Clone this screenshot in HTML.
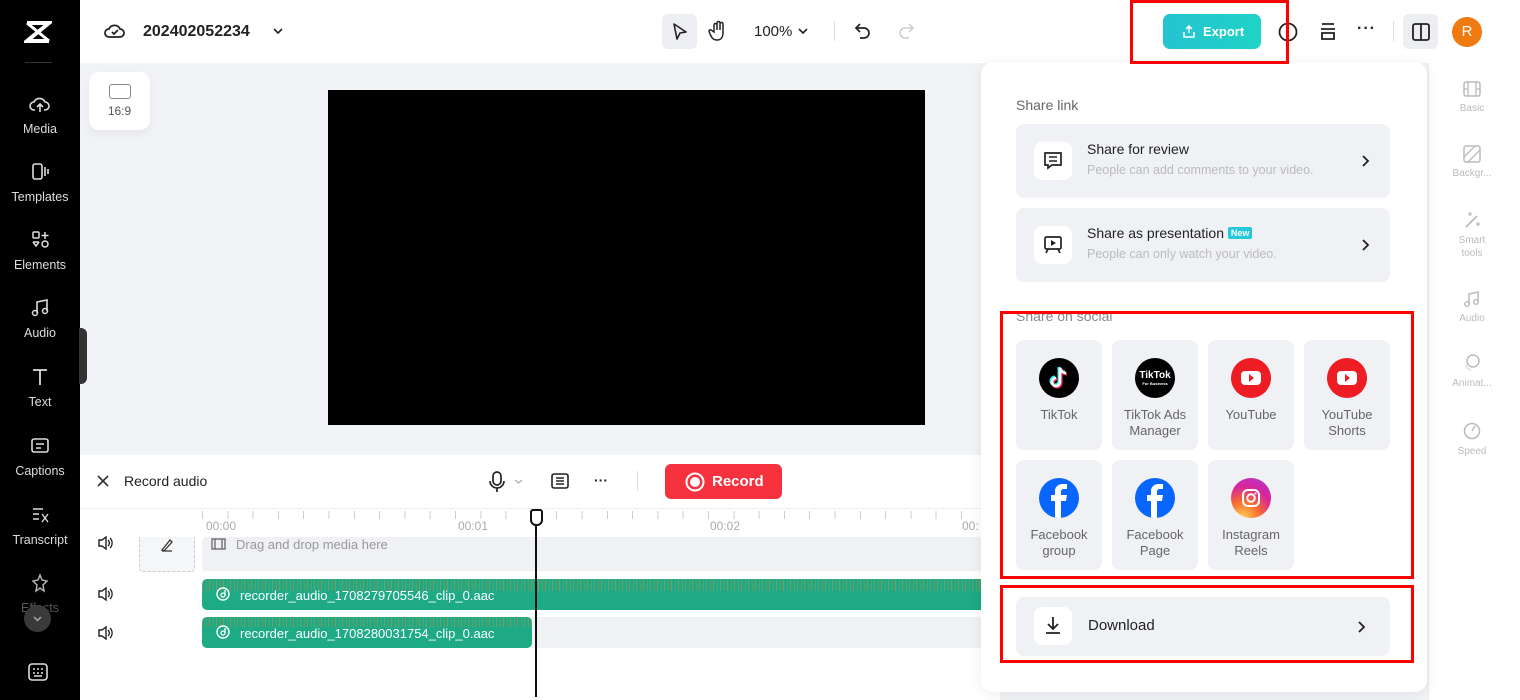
<!DOCTYPE html>
<html><head><meta charset="utf-8"><style>
*{box-sizing:border-box;margin:0;padding:0}
body{width:1520px;height:700px;overflow:hidden;background:#f1f3f6;font-family:"Liberation Sans",sans-serif;position:relative;color:#222}
.abs{position:absolute}
.side{left:0;top:0;width:80px;height:700px;background:#000;color:#ddd}
.si{position:absolute;left:0;width:80px;text-align:center;font-size:12.5px;color:#ddd}
.si svg{display:block;margin:0 auto 4px}
.top{left:80px;top:0;width:1440px;height:63px;background:#fff}
.card{background:#eff1f4;border-radius:8px;position:absolute}
.tile{background:#eff1f4;border-radius:8px;position:absolute;width:86px;height:110px;text-align:center;font-size:13px;color:#666;line-height:16px}
.tile .ic{width:40px;height:40px;border-radius:50%;margin:18px auto 9px;position:relative}
.red{position:absolute;border:3px solid #f00}
.ibox{position:absolute;left:18px;width:38px;height:38px;background:#fff;border-radius:8px}
.rp{position:absolute;left:1440px;width:64px;text-align:center;font-size:10px;color:#bbb;line-height:13px}
</style></head><body>
<div class="abs side">
 <svg class="abs" style="left:24px;top:20px" width="28" height="24" viewBox="0 0 28 24"><path d="M3 3h22L3 21h22" stroke="#fff" stroke-width="4" fill="none"/><path d="M3 3L25 21" stroke="#fff" stroke-width="3"/></svg>
 <div class="abs" style="left:25px;top:62px;width:27px;height:1px;background:#333"></div>
 <div class="si" style="top:94px"><svg width="22" height="20" viewBox="0 0 22 20"><path d="M6 16H5a4 4 0 010-8 6 6 0 0111 0 4 4 0 010 8h-1M11 18v-8M8 13l3-3 3 3" stroke="#ddd" stroke-width="1.6" fill="none"/></svg><span style="position:relative;top:4px">Media</span></div>
 <div class="si" style="top:162px"><svg width="22" height="20" viewBox="0 0 22 20"><rect x="4" y="2" width="9" height="15" rx="2" stroke="#ddd" stroke-width="1.6" fill="none"/><path d="M16 5v9M19 7v5" stroke="#ddd" stroke-width="1.6"/></svg><span style="position:relative;top:4px">Templates</span></div>
 <div class="si" style="top:230px"><svg width="22" height="20" viewBox="0 0 22 20"><rect x="4" y="2" width="6" height="6" rx="1" stroke="#ddd" stroke-width="1.5" fill="none"/><path d="M16 2v7M12.5 5.5h7M4 12l3 4 3-4M4 12h6" stroke="#ddd" stroke-width="1.5" fill="none"/><circle cx="16" cy="14" r="3" stroke="#ddd" stroke-width="1.5" fill="none"/></svg><span style="position:relative;top:4px">Elements</span></div>
 <div class="si" style="top:298px"><svg width="22" height="20" viewBox="0 0 22 20"><path d="M8 15V4l10-2v11" stroke="#ddd" stroke-width="1.6" fill="none"/><circle cx="6" cy="15" r="2.5" stroke="#ddd" stroke-width="1.5" fill="none"/><circle cx="16" cy="13" r="2.5" stroke="#ddd" stroke-width="1.5" fill="none"/></svg><span style="position:relative;top:4px">Audio</span></div>
 <div class="si" style="top:367px"><svg width="22" height="20" viewBox="0 0 22 20"><path d="M4 3h14M11 3v15" stroke="#ddd" stroke-width="1.8"/></svg><span style="position:relative;top:4px">Text</span></div>
 <div class="si" style="top:436px"><svg width="22" height="20" viewBox="0 0 22 20"><rect x="3" y="3" width="16" height="13" rx="2" stroke="#ddd" stroke-width="1.6" fill="none"/><path d="M7 8h8M7 12h5" stroke="#ddd" stroke-width="1.6"/></svg><span style="position:relative;top:4px">Captions</span></div>
 <div class="si" style="top:505px"><svg width="22" height="20" viewBox="0 0 22 20"><path d="M4 4h10M4 9h6M4 14h6" stroke="#ddd" stroke-width="1.6"/><path d="M13 9l6 8M19 9l-6 8" stroke="#ddd" stroke-width="1.4"/></svg><span style="position:relative;top:4px">Transcript</span></div>
 <div class="si" style="top:573px;color:#555"><svg width="22" height="20" viewBox="0 0 22 20"><path d="M11 2l2 5 5 1-4 4 1 6-4-3-4 3 1-6-4-4 5-1z" stroke="#bbb" stroke-width="1.4" fill="none"/></svg><span style="position:relative;top:4px">Effects</span></div>
 <div class="abs" style="left:24px;top:605px;width:27px;height:27px;border-radius:50%;background:#3a3a3a"><svg width="27" height="27"><path d="M10 12l3.5 3.5L17 12" stroke="#aaa" stroke-width="1.5" fill="none"/></svg></div>
 <svg class="abs" style="left:28px;top:663px" width="20" height="18"><rect x="1" y="1" width="18" height="16" rx="3" stroke="#ddd" stroke-width="1.6" fill="none"/><path d="M5 6h2M9 6h2M13 6h2M5 10h2M9 10h2M13 10h2M6 13h8" stroke="#ddd" stroke-width="1.4"/></svg>
</div>
<div class="abs" style="left:79px;top:328px;width:8px;height:56px;background:#333;border-radius:0 6px 6px 0"></div>

<div class="abs top"></div>
<svg class="abs" style="left:104px;top:21px" width="22" height="20"><path d="M6 16H5a4 4 0 010-8 6 6 0 0111 0 4 4 0 010 8H6z" stroke="#222" stroke-width="1.8" fill="none"/><path d="M8 11l2 2 4-4" stroke="#222" stroke-width="1.8" fill="none"/></svg>
<div class="abs" style="left:143px;top:23px;font-size:16px;font-weight:bold;color:#222">202402052234</div>
<svg class="abs" style="left:272px;top:27px" width="12" height="10"><path d="M2 2l4 4 4-4" stroke="#222" stroke-width="1.6" fill="none"/></svg>
<div class="abs" style="left:662px;top:14px;width:35px;height:35px;background:#eceef1;border-radius:6px"></div>
<svg class="abs" style="left:671px;top:22px" width="18" height="20"><path d="M3 2l12 8-6 1-3 6z" stroke="#222" stroke-width="1.6" fill="none" stroke-linejoin="round"/></svg>
<svg class="abs" style="left:708px;top:20px" width="20" height="22"><path d="M6 12V5a1.5 1.5 0 013 0v5V3a1.5 1.5 0 013 0v7V4a1.5 1.5 0 013 0v9c0 4-2 7-6 7s-5-2-7-6l-1-3a1.3 1.3 0 012-1z" stroke="#222" stroke-width="1.5" fill="none"/></svg>
<div class="abs" style="left:754px;top:23px;font-size:15px;color:#222">100%</div>
<svg class="abs" style="left:797px;top:27px" width="12" height="9"><path d="M2 2l4 4 4-4" stroke="#222" stroke-width="1.6" fill="none"/></svg>
<div class="abs" style="left:834px;top:21px;width:1px;height:20px;background:#ddd"></div>
<svg class="abs" style="left:853px;top:21px" width="20" height="20"><path d="M7 3L3 7l4 4M3 7h8a5 5 0 010 10H7" stroke="#222" stroke-width="1.7" fill="none"/></svg>
<svg class="abs" style="left:896px;top:21px" width="20" height="20"><path d="M13 3l4 4-4 4M17 7H9a5 5 0 000 10h4" stroke="#ccc" stroke-width="1.5" fill="none"/></svg>

<div class="abs" style="left:1163px;top:14px;width:98px;height:35px;border-radius:7px;background:linear-gradient(90deg,#25c3d0,#1fd3c6);color:#fff;font-weight:bold;font-size:13px;line-height:35px;padding-left:40px">Export</div>
<svg class="abs" style="left:1182px;top:24px" width="14" height="15"><path d="M7 9V2M4 5l3-3 3 3M2 8v5h10V8" stroke="#fff" stroke-width="1.5" fill="none"/></svg>
<svg class="abs" style="left:1277px;top:21px" width="22" height="22"><circle cx="11" cy="11" r="8.5" stroke="#222" stroke-width="1.8" fill="none"/><path d="M11 6v7" stroke="#222" stroke-width="2"/></svg>
<svg class="abs" style="left:1318px;top:21px" width="20" height="22"><path d="M4 3h12M3 8h14M4 12h12v6H4z" stroke="#222" stroke-width="1.8" fill="none"/></svg>
<div class="abs" style="left:1357px;top:20px;font-size:16px;font-weight:bold;letter-spacing:1px">···</div>
<div class="abs" style="left:1393px;top:21px;width:1px;height:20px;background:#ddd"></div>
<div class="abs" style="left:1403px;top:14px;width:35px;height:35px;background:#eceef1;border-radius:6px"></div>
<svg class="abs" style="left:1411px;top:22px" width="20" height="20"><rect x="2" y="2" width="16" height="16" rx="2" stroke="#222" stroke-width="1.8" fill="none"/><path d="M10 2v16" stroke="#222" stroke-width="1.8"/></svg>
<div class="abs" style="left:1452px;top:17px;width:30px;height:30px;border-radius:50%;background:#f07a10;color:#fff;text-align:center;line-height:30px;font-size:15px">R</div>

<div class="abs" style="left:89px;top:72px;width:61px;height:58px;background:#fff;border-radius:10px;box-shadow:0 4px 10px rgba(0,0,0,.06);text-align:center;font-size:12px;color:#555;padding-top:12px">
 <div style="width:22px;height:15px;border:1.5px solid #888;border-radius:3px;margin:0 auto 5px"></div>16:9</div>
<div class="abs" style="left:328px;top:90px;width:597px;height:335px;background:#000"></div>

<div class="abs" style="left:80px;top:455px;width:920px;height:245px;background:#fff"></div>
<div class="abs" style="left:80px;top:508px;width:920px;height:1px;background:#eee"></div>
<svg class="abs" style="left:96px;top:474px" width="14" height="14"><path d="M2 2l10 10M12 2L2 12" stroke="#333" stroke-width="1.6"/></svg>
<div class="abs" style="left:124px;top:473px;font-size:14px;color:#222">Record audio</div>
<svg class="abs" style="left:488px;top:470px" width="36" height="24"><rect x="5" y="2" width="8" height="13" rx="4" stroke="#222" stroke-width="1.7" fill="none"/><path d="M2 11a7 7 0 0014 0M9 18v4" stroke="#222" stroke-width="1.7" fill="none"/><path d="M27 10l3.5 3 3.5-3" stroke="#aaa" stroke-width="1.2" fill="none"/></svg>
<svg class="abs" style="left:550px;top:472px" width="20" height="18"><rect x="2" y="2" width="16" height="14" rx="2" stroke="#222" stroke-width="1.6" fill="none"/><path d="M6 6h8M6 9h8M6 12h8" stroke="#222" stroke-width="1.4"/></svg>
<div class="abs" style="left:594px;top:472px;font-size:14px;font-weight:bold">···</div>
<div class="abs" style="left:637px;top:471px;width:1px;height:20px;background:#ddd"></div>
<div class="abs" style="left:665px;top:464px;width:117px;height:35px;background:#f7323f;border-radius:6px;color:#fff;font-weight:bold;font-size:15px;line-height:35px;padding-left:47px">Record</div>
<svg class="abs" style="left:684px;top:471px" width="22" height="22"><circle cx="11" cy="11" r="8.5" stroke="#fff" stroke-width="2" fill="none"/><circle cx="11" cy="11" r="5" fill="#fff"/></svg>

<div class="abs" style="left:202px;top:511px;width:780px;height:26px;font-size:12px;color:#aaa;
 background:repeating-linear-gradient(90deg,#ccc 0 1px,transparent 1px 25.3px);background-size:100% 8px;background-repeat:no-repeat"></div>
<div class="abs" style="left:206px;top:519px;font-size:12px;color:#aaa">00:00</div>
<div class="abs" style="left:458px;top:519px;font-size:12px;color:#aaa">00:01</div>
<div class="abs" style="left:710px;top:519px;font-size:12px;color:#aaa">00:02</div>
<div class="abs" style="left:962px;top:519px;font-size:12px;color:#aaa">00:</div>
<div class="abs" style="left:202px;top:537px;width:780px;height:34px;background:#eff1f4;border-radius:4px"></div>
<svg class="abs" style="left:211px;top:537px" width="16" height="14"><rect x="1" y="2" width="13" height="10" stroke="#666" stroke-width="1.3" fill="none"/><path d="M4 2v10M11 2v10" stroke="#666" stroke-width="1.3"/></svg>
<div class="abs" style="left:236px;top:537px;font-size:13px;color:#999">Drag and drop media here</div>
<div class="abs" style="left:139px;top:537px;width:56px;height:35px;border:1px dashed #ccc;border-top:none;border-radius:0 0 4px 4px;background:#f5f6f8"></div>
<svg class="abs" style="left:159px;top:537px" width="16" height="16"><path d="M3 13L11 3l2 2-8 9zM3 14h10" stroke="#333" stroke-width="1.3" fill="none"/></svg>
<div class="abs" style="left:202px;top:617px;width:780px;height:31px;background:#eff1f4;border-radius:4px"></div>
<div class="abs" style="left:202px;top:579px;width:780px;height:31px;border-radius:5px 0 0 5px;
 background-image:repeating-linear-gradient(90deg,rgba(200,140,60,.55) 0 1px,transparent 1px 4px,rgba(200,140,60,.35) 4px 5px,transparent 5px 7px);background-size:100% 12px;background-repeat:no-repeat;background-color:#1daa85"></div>
<div class="abs" style="left:202px;top:617px;width:330px;height:31px;border-radius:5px;
 background-image:repeating-linear-gradient(90deg,rgba(200,140,60,.55) 0 1px,transparent 1px 4px,rgba(200,140,60,.35) 4px 5px,transparent 5px 7px);background-size:100% 10px;background-repeat:no-repeat;background-color:#1daa85"></div>
<div class="abs" style="left:240px;top:588px;font-size:13px;color:#fff">recorder_audio_1708279705546_clip_0.aac</div>
<div class="abs" style="left:240px;top:626px;font-size:13px;color:#fff">recorder_audio_1708280031754_clip_0.aac</div>
<svg class="abs" style="left:215px;top:586px" width="16" height="16"><circle cx="8" cy="8" r="6" stroke="#fff" stroke-width="1.4" fill="none"/><circle cx="8" cy="9" r="2" stroke="#fff" stroke-width="1.3" fill="none"/><path d="M10 9V4" stroke="#fff" stroke-width="1.3"/></svg>
<svg class="abs" style="left:215px;top:624px" width="16" height="16"><circle cx="8" cy="8" r="6" stroke="#fff" stroke-width="1.4" fill="none"/><circle cx="8" cy="9" r="2" stroke="#fff" stroke-width="1.3" fill="none"/><path d="M10 9V4" stroke="#fff" stroke-width="1.3"/></svg>
<svg class="abs" style="left:97px;top:535px" width="18" height="16"><path d="M2 5h3l4-3v12l-4-3H2z" stroke="#222" stroke-width="1.4" fill="none"/><path d="M11 5a4 4 0 010 6M13 3a7 7 0 010 10" stroke="#222" stroke-width="1.3" fill="none"/></svg>
<svg class="abs" style="left:97px;top:586px" width="18" height="16"><path d="M2 5h3l4-3v12l-4-3H2z" stroke="#222" stroke-width="1.4" fill="none"/><path d="M11 5a4 4 0 010 6M13 3a7 7 0 010 10" stroke="#222" stroke-width="1.3" fill="none"/></svg>
<svg class="abs" style="left:97px;top:625px" width="18" height="16"><path d="M2 5h3l4-3v12l-4-3H2z" stroke="#222" stroke-width="1.4" fill="none"/><path d="M11 5a4 4 0 010 6M13 3a7 7 0 010 10" stroke="#222" stroke-width="1.3" fill="none"/></svg>
<div class="abs" style="left:535px;top:520px;width:2px;height:177px;background:#111"></div>
<div class="abs" style="left:530px;top:509px;width:13px;height:17px;border:2px solid #111;background:#fff;border-radius:3px 3px 6px 6px"></div>

<div class="abs" style="left:1428px;top:63px;width:92px;height:637px;background:#fff;border-left:1px solid #eee"></div>
<div class="rp" style="top:80px"><svg width="20" height="18"><rect x="2" y="2" width="16" height="14" rx="2" stroke="#bbb" stroke-width="1.5" fill="none"/><path d="M6 2v14M14 2v14M2 9h4M14 9h4" stroke="#bbb" stroke-width="1.3"/></svg><br>Basic</div>
<div class="rp" style="top:145px"><svg width="20" height="18"><rect x="2" y="1" width="16" height="16" rx="2" stroke="#bbb" stroke-width="1.5" fill="none"/><path d="M2 12L13 1M6 17L18 5" stroke="#bbb" stroke-width="1.3"/></svg><br>Backgr...</div>
<div class="rp" style="top:210px"><svg width="20" height="20"><path d="M4 17L15 6" stroke="#bbb" stroke-width="1.8"/><path d="M8 2v4M6 4h4M16 12v4M14 14h4" stroke="#bbb" stroke-width="1.3"/></svg><br>Smart<br>tools</div>
<div class="rp" style="top:290px"><svg width="20" height="18"><path d="M7 14V4l9-2v10" stroke="#bbb" stroke-width="1.5" fill="none"/><circle cx="5" cy="14" r="2.3" stroke="#bbb" stroke-width="1.4" fill="none"/><circle cx="14" cy="12" r="2.3" stroke="#bbb" stroke-width="1.4" fill="none"/></svg><br>Audio</div>
<div class="rp" style="top:353px"><svg width="20" height="20"><circle cx="11" cy="8" r="6" stroke="#bbb" stroke-width="1.5" fill="none"/><path d="M4 12a6 6 0 005 5" stroke="#ddd" stroke-width="1.5" fill="none"/></svg><br>Animat...</div>
<div class="rp" style="top:421px"><svg width="20" height="20"><circle cx="10" cy="10" r="7.5" stroke="#bbb" stroke-width="1.5" fill="none"/><path d="M10 10l3-5" stroke="#bbb" stroke-width="1.5"/></svg><br>Speed</div>

<div class="abs" style="left:981px;top:62px;width:446px;height:630px;background:#fff;border-radius:12px;box-shadow:0 2px 14px rgba(0,0,0,.08)"></div>
<div class="abs" style="left:1016px;top:97px;font-size:14px;color:#666">Share link</div>
<div class="card" style="left:1016px;top:124px;width:374px;height:74px">
 <div class="ibox" style="top:18px"><svg width="38" height="38"><path d="M11 11h16v12H18l-4 3v-3h-3z" stroke="#222" stroke-width="1.7" fill="none"/><path d="M15 15h8M15 19h8" stroke="#222" stroke-width="1.5"/></svg></div>
 <div class="abs" style="left:71px;top:17px;font-size:14px;color:#222">Share for review</div>
 <div class="abs" style="left:71px;top:39px;font-size:12.5px;color:#bbb">People can add comments to your video.</div>
 <svg class="abs" style="left:344px;top:30px" width="10" height="14"><path d="M3 2l5 5-5 5" stroke="#222" stroke-width="1.8" fill="none"/></svg>
</div>
<div class="card" style="left:1016px;top:208px;width:374px;height:74px">
 <div class="ibox" style="top:18px"><svg width="38" height="38"><rect x="11" y="11" width="16" height="12" rx="1.5" stroke="#222" stroke-width="1.7" fill="none"/><path d="M17 14l5 3-5 3z" fill="#222"/><path d="M14 23l-2 4M24 23l2 4" stroke="#222" stroke-width="1.7"/></svg></div>
 <div class="abs" style="left:71px;top:17px;font-size:14px;color:#222">Share as presentation <span style="display:inline-block;background:#25c8d8;color:#fff;font-size:9px;font-weight:bold;padding:1px 3px;border-radius:2px;vertical-align:2px">New</span></div>
 <div class="abs" style="left:71px;top:39px;font-size:12.5px;color:#bbb">People can only watch your video.</div>
 <svg class="abs" style="left:344px;top:30px" width="10" height="14"><path d="M3 2l5 5-5 5" stroke="#222" stroke-width="1.8" fill="none"/></svg>
</div>
<div class="abs" style="left:1016px;top:308px;font-size:14px;color:#888">Share on social</div>

<div class="tile" style="left:1016px;top:340px"><div class="ic" style="background:#000"><svg width="40" height="40"><path d="M21 10v14a4 4 0 11-4-4M21 10c1 3 3 5 6 5" stroke="#25f4ee" stroke-width="3" fill="none" transform="translate(-1,-1)"/><path d="M21 10v14a4 4 0 11-4-4M21 10c1 3 3 5 6 5" stroke="#fe2c55" stroke-width="3" fill="none" transform="translate(1,1)"/><path d="M21 10v14a4 4 0 11-4-4M21 10c1 3 3 5 6 5" stroke="#fff" stroke-width="2.6" fill="none"/></svg></div>TikTok</div>
<div class="tile" style="left:1112px;top:340px"><div class="ic" style="background:#000;color:#fff;font-size:10px;font-weight:bold;line-height:10px;padding-top:13px">TikTok<div style="font-size:4px;line-height:5px">For Business</div></div>TikTok Ads Manager</div>
<div class="tile" style="left:1208px;top:340px"><div class="ic" style="background:#ee1d23"><div style="position:absolute;left:10px;top:13px;width:20px;height:14px;background:#fff;border-radius:4px"></div><svg class="abs" style="left:0;top:0" width="40" height="40"><path d="M18 16l5 4-5 4z" fill="#ee1d23"/></svg></div>YouTube</div>
<div class="tile" style="left:1304px;top:340px"><div class="ic" style="background:#ee1d23"><div style="position:absolute;left:10px;top:13px;width:20px;height:14px;background:#fff;border-radius:4px"></div><svg class="abs" style="left:0;top:0" width="40" height="40"><path d="M18 16l5 4-5 4z" fill="#ee1d23"/></svg></div>YouTube Shorts</div>
<div class="tile" style="left:1016px;top:460px"><div class="ic" style="background:#0866ff;overflow:hidden"><svg width="40" height="40"><path d="M22 40V23h5l1-6h-6v-3c0-2 1-3 3-3h3V6h-4c-5 0-8 3-8 7v4h-4v6h4v17z" fill="#fff"/></svg></div>Facebook group</div>
<div class="tile" style="left:1112px;top:460px"><div class="ic" style="background:#0866ff;overflow:hidden"><svg width="40" height="40"><path d="M22 40V23h5l1-6h-6v-3c0-2 1-3 3-3h3V6h-4c-5 0-8 3-8 7v4h-4v6h4v17z" fill="#fff"/></svg></div>Facebook Page</div>
<div class="tile" style="left:1208px;top:460px"><div class="ic" style="background:radial-gradient(circle at 30% 100%,#fdd154 0,#f86b2f 35%,#d6249f 65%,#b03ad8 100%)"><svg width="40" height="40"><rect x="12" y="12" width="16" height="16" rx="5" stroke="#fff" stroke-width="2" fill="none"/><circle cx="20" cy="20" r="3.8" stroke="#fff" stroke-width="2" fill="none"/><circle cx="24.5" cy="15.5" r="1" fill="#fff"/></svg></div>Instagram Reels</div>

<div class="card" style="left:1016px;top:597px;width:374px;height:59px">
 <div class="ibox" style="top:10px"><svg width="38" height="38"><path d="M19 10v12M14 17l5 5 5-5M12 26h14" stroke="#222" stroke-width="1.8" fill="none"/></svg></div>
 <div class="abs" style="left:72px;top:20px;font-size:15px;color:#222">Download</div>
 <svg class="abs" style="left:340px;top:23px" width="10" height="14"><path d="M3 2l5 5-5 5" stroke="#222" stroke-width="1.8" fill="none"/></svg>
</div>

<div class="red" style="left:1130px;top:0;width:159px;height:64px"></div>
<div class="red" style="left:1000px;top:311px;width:414px;height:268px"></div>
<div class="red" style="left:1000px;top:585px;width:414px;height:78px"></div>
</body></html>
